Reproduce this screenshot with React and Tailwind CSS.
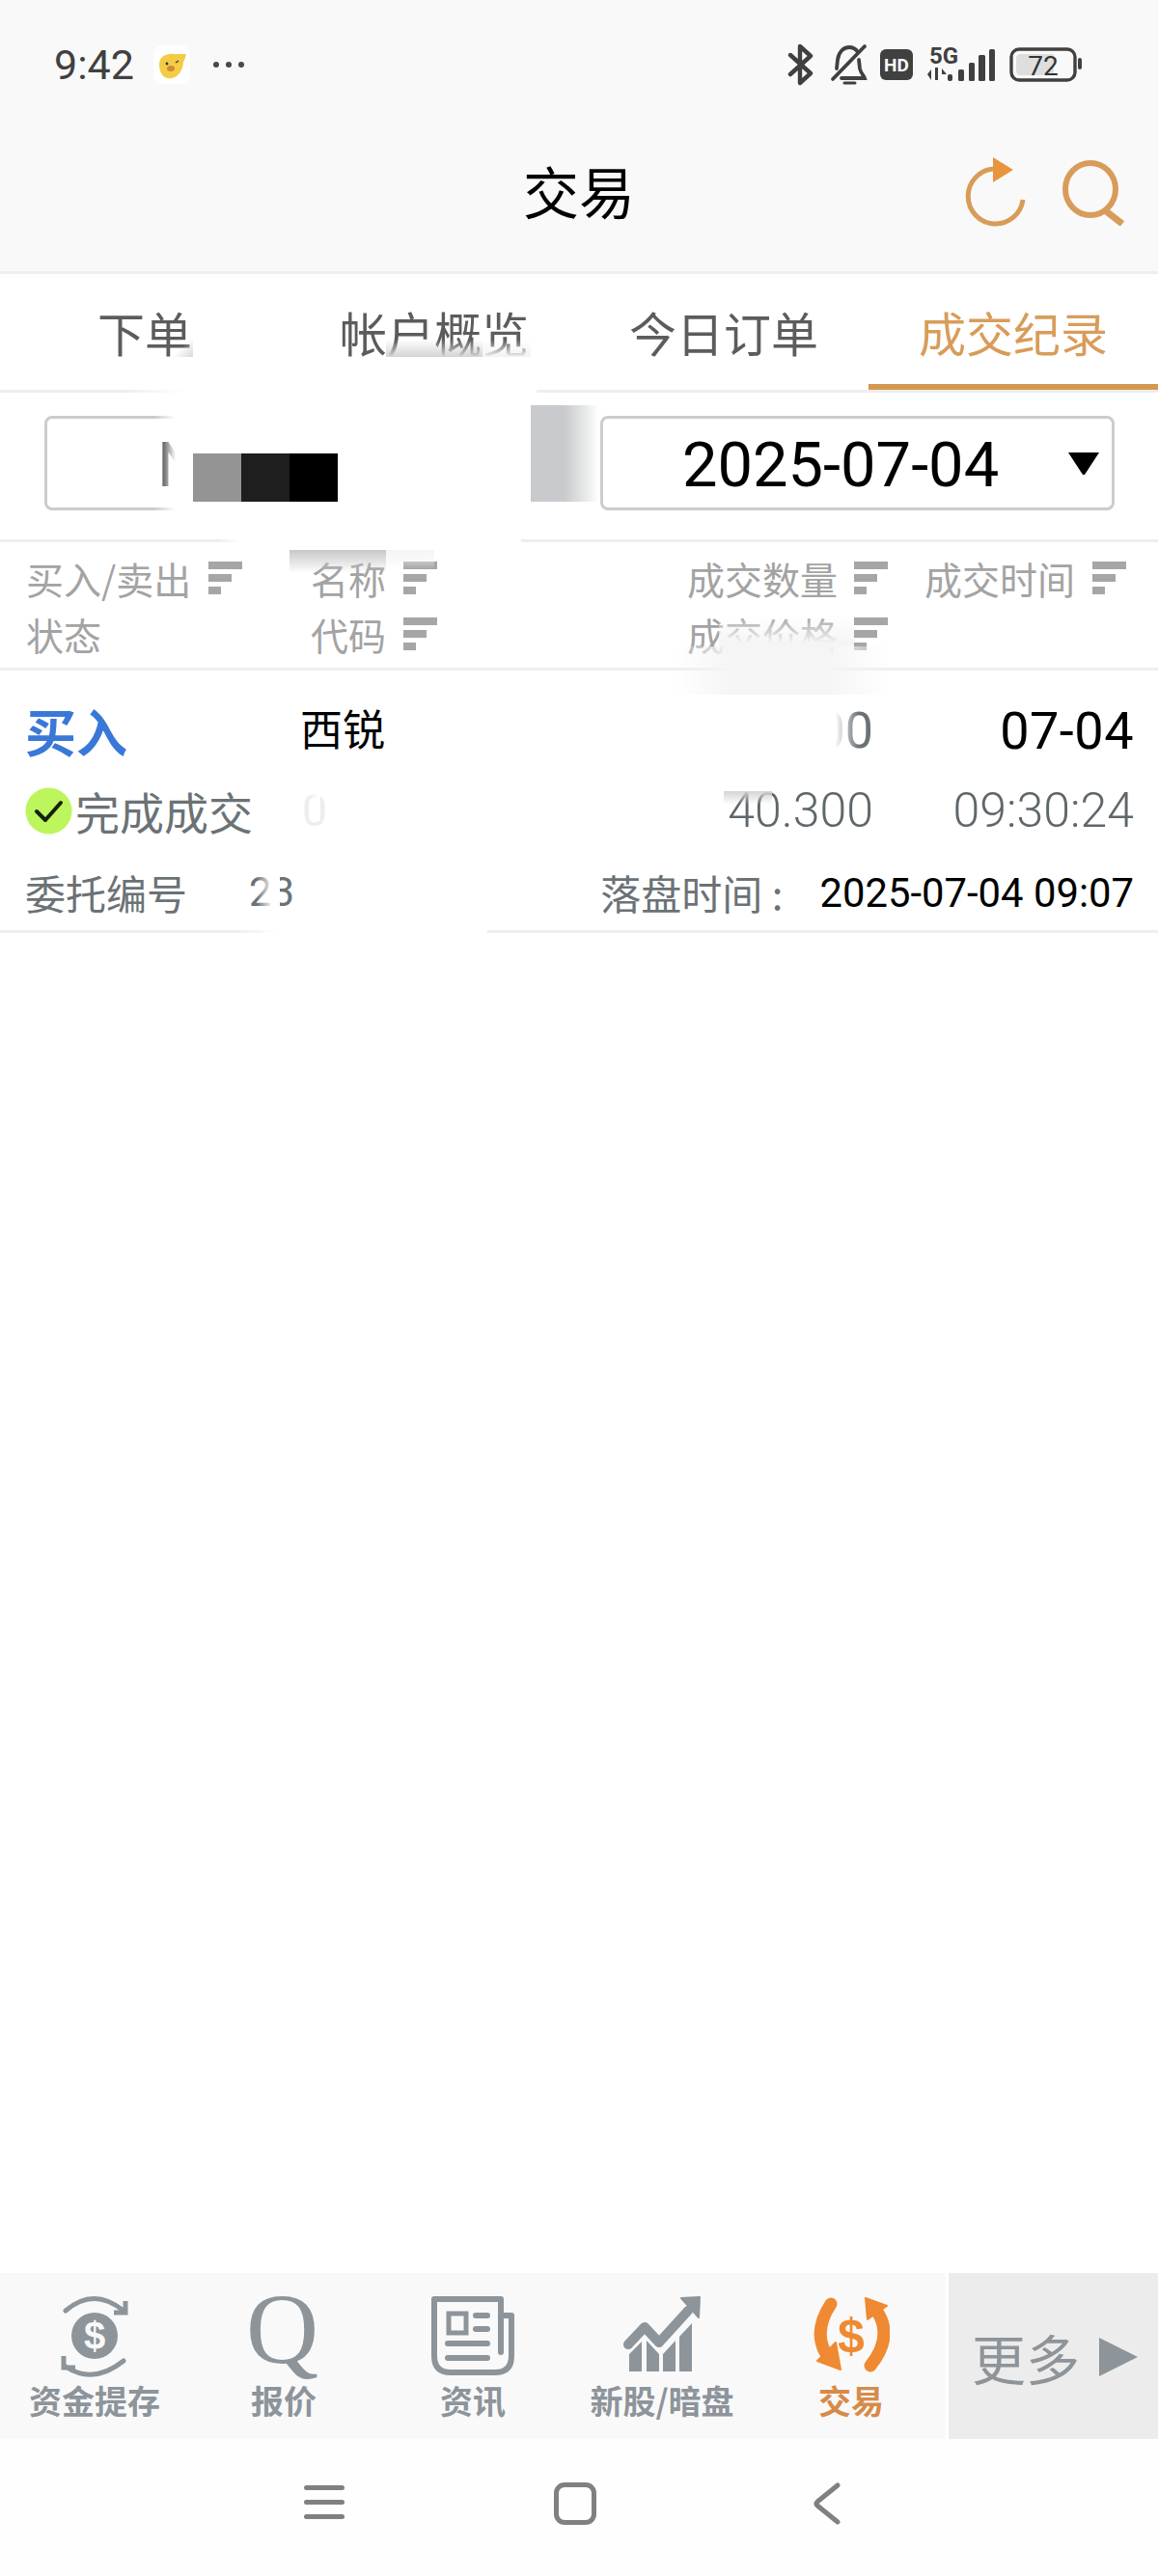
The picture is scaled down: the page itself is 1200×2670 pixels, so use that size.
import React from "react";

const roboto = "font-['Roboto',sans-serif]";

function Sort() {
  return (
    <svg width="35" height="34" viewBox="0 0 35 34" className="shrink-0" fill="#a6a6a6">
      <rect x="0" y="0" width="35" height="8" />
      <rect x="0" y="13" width="24" height="8" />
      <rect x="0" y="26" width="13" height="8" />
    </svg>
  );
}

function Head({ label, noIcon, gap = "gap-[18px]" }) {
  return (
    <div className={`flex h-[58px] items-center ${gap} text-[39px] leading-none text-[#a3a3a3]`}>
      <span>{label}</span>
      {noIcon ? null : <Sort />}
    </div>
  );
}

function StatusLeft() {
  return (
    <div className="flex items-center">
      <span className={`${roboto} w-[103px] text-[43px] leading-none text-[#404040]`}>9:42</span>
      <svg width="40" height="40" viewBox="0 0 40 40">
        <rect x="0" y="0" width="38" height="40" rx="9" fill="#ffffff" />
        <path d="M6 20 C6 11 14 8 22 9 L34 9 C33 12 33 14 31 17 C31 26 24 36 15 34 C9 33 6 27 6 20Z" fill="#f3cc45" />
        <circle cx="14" cy="19" r="1.4" fill="#333" />
        <path d="M23 18 l3 -2" stroke="#333" strokeWidth="1.2" />
        <ellipse cx="18" cy="24" rx="4" ry="3" fill="#cf8a3a" />
      </svg>
      <div className="ml-[22px] flex gap-[7px]">
        <div className="h-[6px] w-[6px] rounded-full bg-[#484848]" />
        <div className="h-[6px] w-[6px] rounded-full bg-[#484848]" />
        <div className="h-[6px] w-[6px] rounded-full bg-[#484848]" />
      </div>
    </div>
  );
}

function StatusRight() {
  return (
    <div className="flex items-center">
      <svg width="28" height="44" viewBox="0 0 28 44" fill="none" stroke="#404040" strokeWidth="4.4" strokeLinejoin="round" strokeLinecap="round">
        <path d="M3 12 L24 31 L13 41 L13 3 L24 13 L3 32" />
      </svg>
      <svg width="40" height="44" viewBox="0 0 40 44" fill="none" stroke="#404040" strokeWidth="3.8" strokeLinecap="round" className="ml-[16px]">
        <path d="M7 26 L8 17 C9 9 14 4 20 4 C24 4 27 6 29 9" />
        <path d="M30 17 L31 26 C32 31 35 33 36 36 L12 36" />
        <path d="M36 3 L3 37" />
        <path d="M15 41 L26 41" strokeWidth="3" />
      </svg>
      <div className={`${roboto} ml-[12px] flex h-[32px] w-[34px] items-center justify-center rounded-[6px] bg-[#404040] text-[19px] leading-none font-bold text-[#fafafa]`}>HD</div>
      <svg width="70" height="38" viewBox="0 0 70 38" className="ml-[15px]">
        <text x="2" y="18" fontFamily="Roboto, sans-serif" fontSize="24" fontWeight="700" fill="#404040">5G</text>
        <path d="M0 29 L4 24 V35 Z M8 22 H11 V35 H8 Z M15 23 L20 29 H15 Z" fill="#404040" />
        <rect x="21" y="29" width="5" height="7" rx="2" fill="#404040" />
        <rect x="32" y="24" width="6" height="12" rx="1.5" fill="#404040" />
        <rect x="43" y="17" width="6" height="19" rx="1.5" fill="#404040" />
        <rect x="53" y="9" width="7" height="27" rx="1.5" fill="#404040" />
        <rect x="64" y="3" width="6" height="33" rx="1.5" fill="#404040" />
      </svg>
      <svg width="76" height="36" viewBox="0 0 76 36" className="ml-[15px]">
        <rect x="2" y="2" width="66" height="32" rx="8" fill="none" stroke="#404040" strokeWidth="3.4" />
        <path d="M7 12 Q7 7 12 7 H46 V29 H12 Q7 29 7 24 Z" fill="#dedede" />
        <text x="35" y="29" textAnchor="middle" fontFamily="Roboto, sans-serif" fontSize="28" fill="#333333">72</text>
        <rect x="71" y="11" width="4" height="12" rx="2" fill="#404040" />
      </svg>
    </div>
  );
}

function FundIcon() {
  return (
    <svg width="72" height="86" viewBox="0 0 72 86" fill="none">
      <circle cx="36" cy="43" r="24" fill="#8d949a" />
      <text x="36" y="57" textAnchor="middle" fontFamily="'Liberation Sans', sans-serif" fontWeight="700" fontSize="40" fill="#f9f9f9">$</text>
      <path d="M6 17 Q35 -8 66 17" stroke="#8d949a" strokeWidth="5" strokeLinecap="round" />
      <path d="M68 7 V19 H56" stroke="#8d949a" strokeWidth="5" />
      <path d="M66 69 Q35 94 6 75" stroke="#8d949a" strokeWidth="5" strokeLinecap="round" />
      <path d="M4 64 V76 H16" stroke="#8d949a" strokeWidth="5" />
    </svg>
  );
}

function QIcon() {
  return (
    <div className="flex h-[86px] w-[76px] items-start justify-center pr-[3px] font-['Liberation_Serif',serif] text-[104px] leading-[72px] text-[#8d949a]">Q</div>
  );
}

function NewsIcon() {
  return (
    <svg width="86" height="86" viewBox="0 0 86 86" fill="none" stroke="#8d949a">
      <path d="M72 60 V5 H3 V64 Q3 81 20 81 H66 Q83 81 83 64 V22 H72" strokeWidth="6" strokeLinejoin="round" strokeLinecap="round" />
      <rect x="18" y="20" width="18" height="20" strokeWidth="5" />
      <path d="M46 22 H58 M46 36 H58 M17 51 H58 M17 66 H58" strokeWidth="6" strokeLinecap="round" />
    </svg>
  );
}

function GrowthIcon() {
  return (
    <svg width="82" height="86" viewBox="0 0 82 86" fill="#8d949a">
      <path d="M7 80 V62 L20 49 V80 Z M25 48 L38 62 V80 H25 Z M42 62 L55 48 V80 H42 Z M59 44 L72 30 V80 H59 Z" />
      <path d="M6 52 L23 34 L38 50 L68 17" fill="none" stroke="#8d949a" strokeWidth="10" strokeLinecap="round" strokeLinejoin="round" />
      <path d="M61 4 L80 3 L79 24 Z" stroke="#8d949a" strokeWidth="2" strokeLinejoin="round" />
    </svg>
  );
}

function TradeIcon() {
  return (
    <svg width="80" height="86" viewBox="0 0 80 86" fill="none">
      <path d="M19 10 Q1 37 13 60" stroke="#ef8a32" strokeWidth="13" strokeLinecap="round" />
      <path d="M5 69 L29 78 L24 50 Z" fill="#ef8a32" stroke="#ef8a32" strokeWidth="2" strokeLinejoin="round" />
      <path d="M67 18 Q84 44 60 74" stroke="#ef8a32" strokeWidth="13" strokeLinecap="round" />
      <path d="M55 4 L77 12 L57 26 Z" fill="#ef8a32" stroke="#ef8a32" strokeWidth="2" strokeLinejoin="round" />
      <text x="40" y="60" textAnchor="middle" fontFamily="'Liberation Sans', sans-serif" fontWeight="700" fontSize="50" fill="#ef8a32">$</text>
    </svg>
  );
}

function NavItem({ icon, label, active }) {
  return (
    <div className="flex w-[196px] flex-col items-center pt-[22px]">
      <div className="flex h-[86px] items-start justify-center">{icon}</div>
      <div className={`mt-[7px] text-[34px] leading-[33px] font-bold whitespace-nowrap ${active ? "text-[#d68b4a]" : "text-[#8d949a]"}`}>{label}</div>
    </div>
  );
}

export default function App() {
  return (
    <div className="relative flex h-[2670px] w-[1200px] flex-col overflow-hidden bg-white font-['Noto_Sans_CJK_SC',sans-serif]">
      {/* header */}
      <header className="flex h-[284px] flex-col border-b-[3px] border-[#eeeeee] bg-[#f9f9f9]">
        <div className="flex h-[134px] items-center justify-between pr-[78px] pl-[56px]">
          <StatusLeft />
          <StatusRight />
        </div>
        <div className="relative flex h-[132px] items-center justify-center">
          <div className="mb-[7px] text-[58px] leading-none text-black">交易</div>
          <div className="absolute top-[29px] right-[33px] flex items-start gap-[37px]">
            <svg width="64" height="72" viewBox="0 0 64 72" fill="none">
              <path d="M60 44 A28.5 28.5 0 1 1 30 12" stroke="#d89c5a" strokeWidth="5" />
              <path d="M29 0 L50 13 L29 26 Z" fill="#e8953f" />
            </svg>
            <svg width="66" height="68" viewBox="0 0 66 68" fill="none" stroke="#d89c5a" strokeWidth="6" className="mt-[3px]">
              <ellipse cx="29" cy="30" rx="26" ry="27" />
              <path d="M44 52 L62 66" strokeWidth="7" />
            </svg>
          </div>
        </div>
      </header>

      {/* tabs */}
      <nav className="grid h-[123px] grid-cols-4 border-b-[3px] border-[#eeeeee] text-[49px] leading-none text-[#5c5c5c]">
        <div className="flex items-center justify-center border-b-[6px] border-transparent pt-[4px]">下单</div>
        <div className="flex items-center justify-center border-b-[6px] border-transparent pt-[4px]">帐户概览</div>
        <div className="flex items-center justify-center border-b-[6px] border-transparent pt-[4px]">今日订单</div>
        <div className="flex items-center justify-center border-b-[6px] border-[#d4984f] pt-[4px] text-[#d89c5a]">成交纪录</div>
      </nav>

      {/* filters */}
      <section className="flex h-[155px] items-start border-b-[3px] border-[#eeeeee] pt-[24px] pl-[46px]">
        <div className="flex h-[98px] w-[500px] items-center rounded-[8px] border-[3px] border-[#cccccc] pt-[4px] pl-[114px] text-[65px] leading-none text-black">
          <span className={roboto}>N</span>
        </div>
        <div className="ml-[76px] flex h-[98px] w-[533px] items-center justify-between rounded-[8px] border-[3px] border-[#cccccc] pr-[12px] pl-[82px]">
          <span className={`${roboto} pt-[4px] text-[65px] leading-none text-black`}>2025-07-04</span>
          <svg width="34" height="26" viewBox="0 0 34 26" fill="#000">
            <path d="M1 2 H33 L18 25 H16 Z" />
          </svg>
        </div>
      </section>

      {/* table head */}
      <section className="grid h-[133px] grid-cols-[322px_390px_246px_242px] border-b-[3px] border-[#eeeeee] pt-[8px]">
        <div className="pl-[27px]">
          <Head label="买入/卖出" gap="gap-[18px]" />
          <Head label="状态" noIcon />
        </div>
        <div>
          <Head label="名称" gap="gap-[18px]" />
          <Head label="代码" gap="gap-[18px]" />
        </div>
        <div>
          <Head label="成交数量" gap="gap-[17px]" />
          <Head label="成交价格" gap="gap-[17px]" />
        </div>
        <div>
          <Head label="成交时间" gap="gap-[18px]" />
        </div>
      </section>

      {/* record */}
      <section className="flex h-[272px] flex-col border-b-[3px] border-[#eeeeee] pt-[20px]">
        <div className="grid h-[85px] grid-cols-[313px_300px_292px_270px] items-center">
          <div className="pl-[26px] text-[53px] leading-none font-bold text-[#3a78d8]">买入</div>
          <div className="-ml-[2px] pb-[8px] text-[44px] leading-none text-black">西锐</div>
          <div className={`${roboto} text-right text-[52px] leading-none text-[#6b7276]`}>00</div>
          <div className={`${roboto} text-right text-[54px] leading-none tracking-[0.5px] text-black`}>07-04</div>
        </div>
        <div className="grid h-[85px] grid-cols-[313px_300px_292px_270px] items-center pb-[5px]">
          <div className="flex items-center gap-[3px] pl-[26px]">
            <svg width="49" height="49" viewBox="0 0 49 49">
              <circle cx="24.5" cy="24.5" r="24" fill="#bdf55c" />
              <path d="M12 25 L21 34 L37 16" fill="none" stroke="#14210a" strokeWidth="4" strokeLinecap="round" strokeLinejoin="round" />
            </svg>
            <span className="text-[46px] leading-none whitespace-nowrap text-[#6b7276]">完成成交</span>
          </div>
          <div className={`${roboto} text-[46px] leading-none text-[#ededed]`}>0</div>
          <div className={`${roboto} text-right text-[50px] leading-none font-light text-[#5f676b]`}>40.300</div>
          <div className={`${roboto} text-right text-[50px] leading-none font-light text-[#5f676b]`}>09:30:24</div>
        </div>
        <div className="flex flex-1 items-center pr-[25px] pl-[26px] text-[42px] leading-none text-[#6b7276]">
          <span>委托编号</span>
          <span className={`${roboto} ml-[64px] text-[42px]`}>23</span>
          <span className="ml-[317px]">落盘时间 :</span>
          <span className={`${roboto} ml-auto pt-[2px] text-[41.8px] text-black`}>2025-07-04 09:07</span>
        </div>
      </section>

      {/* bottom nav */}
      <div className="mt-auto flex h-[172px] bg-white">
        <div className="flex w-[980px] bg-[#f9f9f9]">
          <NavItem icon={<FundIcon />} label="资金提存" />
          <NavItem icon={<QIcon />} label="报价" />
          <NavItem icon={<NewsIcon />} label="资讯" />
          <NavItem icon={<GrowthIcon />} label="新股/暗盘" />
          <NavItem icon={<TradeIcon />} label="交易" active />
        </div>
        <div className="ml-[3px] flex flex-1 items-center gap-[20px] bg-[#ececec] pt-[2px] pl-[24px] text-[56px] leading-none text-[#8d949a]">
          <span>更多</span>
          <svg width="40" height="40" viewBox="0 0 40 40" fill="#8d949a">
            <path d="M0 0 L40 20 L0 40 Z" />
          </svg>
        </div>
      </div>

      {/* system nav */}
      <div className="flex h-[142px] items-start bg-[#fefefe] pt-[45px] pl-[315px]">
        <div className="flex h-[38px] w-[42px] flex-col justify-between pt-[3px]">
          <div className="h-[5px] rounded-full bg-[#808080]" />
          <div className="h-[5px] rounded-full bg-[#808080]" />
          <div className="h-[5px] rounded-full bg-[#808080]" />
        </div>
        <div className="ml-[217px] h-[44px] w-[44px] rounded-[11px] border-[5px] border-[#808080]" />
        <svg width="28" height="44" viewBox="0 0 28 44" fill="none" stroke="#808080" strokeWidth="5" strokeLinecap="round" strokeLinejoin="round" className="ml-[225px]">
          <path d="M25 3 L4 20 Q2 22 4 24 L25 41" />
        </svg>
      </div>

      {/* redaction patches over the screenshot */}
      <div className="absolute top-[345px] left-[170px] h-[25px] w-[30px] bg-[linear-gradient(135deg,transparent_60%,#d9d9d9)]" />
      <div className="absolute top-[352px] left-[400px] h-[18px] w-[100px] bg-[linear-gradient(to_bottom,transparent,#d4d4d4)]" />
      <div className="absolute top-[352px] left-[500px] h-[18px] w-[50px] bg-[linear-gradient(to_bottom,transparent,#f3f3f3)]" />
      <div className="absolute top-[400px] left-[130px] h-[10px] w-[61px] bg-[linear-gradient(to_right,transparent,white)]" />
      <div className="absolute top-[420px] left-[160px] h-[118px] w-[22px] bg-[linear-gradient(to_right,transparent,white)]" />
      <div className="absolute top-[420px] left-[182px] h-[118px] w-[10px] bg-white" />
      <div className="absolute top-[400px] left-[191px] h-[156px] w-[360px] bg-white" />
      <div className="absolute top-[400px] left-[550px] h-[20px] w-[6px] bg-white" />
      <div className="absolute top-[520px] left-[550px] h-[36px] w-[40px] bg-white" />
      <div className="absolute top-[556px] left-[225px] h-[8px] w-[25px] bg-[linear-gradient(to_right,transparent,white)]" />
      <div className="absolute top-[556px] left-[250px] h-[8px] w-[290px] bg-white" />
      <div className="absolute top-[470px] left-[200px] flex h-[50px] w-[150px]">
        <div className="w-[50px] bg-[#949494]" />
        <div className="w-[50px] bg-[#1e1e1e]" />
        <div className="w-[50px] bg-black" />
      </div>
      <div className="absolute top-[420px] left-[550px] h-[100px] w-[70px] bg-[linear-gradient(to_right,#c9cacd,#c9cacd_50%,#eceded_85%,transparent)]" />
      <div className="absolute top-[570px] left-[300px] h-[24px] w-[100px] bg-[linear-gradient(to_bottom,#c8c8c8,transparent)]" />
      <div className="absolute top-[570px] left-[400px] h-[20px] w-[50px] bg-[linear-gradient(to_bottom,#f4f4f4,transparent)]" />
      <div className="absolute top-[638px] left-[745px] h-[32px] w-[140px] bg-[linear-gradient(to_bottom,transparent,#f5f5f5_90%)]" />
      <div className="absolute top-[670px] left-[700px] h-[50px] w-[225px] bg-[linear-gradient(to_right,transparent,#f5f5f5_25%,#f5f5f5_70%,transparent)]" />
      <div className="absolute top-[730px] left-[845px] h-[50px] w-[45px] bg-[linear-gradient(to_right,white_45%,transparent)]" />
      <div className="absolute top-[820px] left-[750px] h-[14px] w-[50px] bg-[linear-gradient(to_bottom,#d4d4d4,transparent)]" />
      <div className="absolute top-[815px] left-[318px] h-[36px] w-[14px] bg-[linear-gradient(to_right,transparent,white)]" />
      <div className="absolute top-[900px] left-[266px] h-[50px] w-[24px] bg-[linear-gradient(to_right,transparent,white_70%)]" />
      <div className="absolute top-[962px] left-[245px] h-[8px] w-[42px] bg-[linear-gradient(to_right,transparent,white)]" />
      <div className="absolute top-[962px] left-[287px] h-[8px] w-[218px] bg-white" />
    </div>
  );
}
